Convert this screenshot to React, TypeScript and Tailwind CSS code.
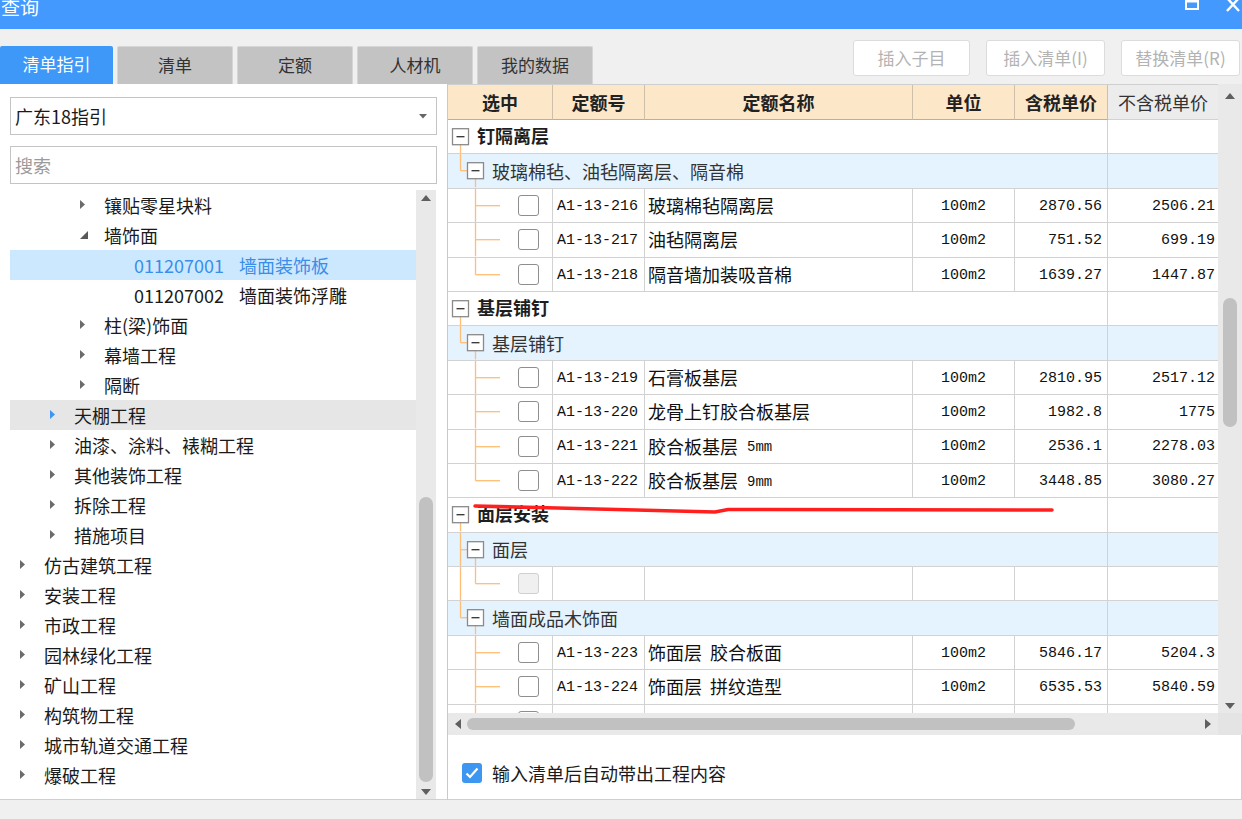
import React from "react";

const CJK = "font-['Noto_Sans_CJK_SC','Noto_Sans',sans-serif]";
const MONO = "font-['Liberation_Mono','DejaVu_Sans_Mono',monospace]";
const LINE = "#ffbd76";

type TreeItem = {
  lvl: number;
  text: string;
  code?: string;
  arrow?: "right" | "down" | "blue";
  selected?: boolean;
  hover?: boolean;
};

const tree: TreeItem[] = [
  { lvl: 2, arrow: "right", text: "镶贴零星块料" },
  { lvl: 2, arrow: "down", text: "墙饰面" },
  { lvl: 3, code: "011207001", text: "墙面装饰板", selected: true },
  { lvl: 3, code: "011207002", text: "墙面装饰浮雕" },
  { lvl: 2, arrow: "right", text: "柱(梁)饰面" },
  { lvl: 2, arrow: "right", text: "幕墙工程" },
  { lvl: 2, arrow: "right", text: "隔断" },
  { lvl: 1, arrow: "blue", text: "天棚工程", hover: true },
  { lvl: 1, arrow: "right", text: "油漆、涂料、裱糊工程" },
  { lvl: 1, arrow: "right", text: "其他装饰工程" },
  { lvl: 1, arrow: "right", text: "拆除工程" },
  { lvl: 1, arrow: "right", text: "措施项目" },
  { lvl: 0, arrow: "right", text: "仿古建筑工程" },
  { lvl: 0, arrow: "right", text: "安装工程" },
  { lvl: 0, arrow: "right", text: "市政工程" },
  { lvl: 0, arrow: "right", text: "园林绿化工程" },
  { lvl: 0, arrow: "right", text: "矿山工程" },
  { lvl: 0, arrow: "right", text: "构筑物工程" },
  { lvl: 0, arrow: "right", text: "城市轨道交通工程" },
  { lvl: 0, arrow: "right", text: "爆破工程" },
];

const indent = ["pl-[10px]", "pl-[40px]", "pl-[70px]", "pl-[124px]"];

type Row =
  | { kind: "g1"; text: string; child: boolean }
  | { kind: "g2"; text: string; l1more: boolean; child: boolean }
  | {
      kind: "d";
      l1more: boolean;
      last: boolean;
      code?: string;
      name?: string;
      mm?: string;
      unit?: string;
      p1?: string;
      p2?: string;
      disabled?: boolean;
    };

const rows: Row[] = [
  { kind: "g1", text: "钉隔离层", child: true },
  { kind: "g2", text: "玻璃棉毡、油毡隔离层、隔音棉", l1more: false, child: true },
  { kind: "d", l1more: false, last: false, code: "A1-13-216", name: "玻璃棉毡隔离层", unit: "100m2", p1: "2870.56", p2: "2506.21" },
  { kind: "d", l1more: false, last: false, code: "A1-13-217", name: "油毡隔离层", unit: "100m2", p1: "751.52", p2: "699.19" },
  { kind: "d", l1more: false, last: true, code: "A1-13-218", name: "隔音墙加装吸音棉", unit: "100m2", p1: "1639.27", p2: "1447.87" },
  { kind: "g1", text: "基层铺钉", child: true },
  { kind: "g2", text: "基层铺钉", l1more: false, child: true },
  { kind: "d", l1more: false, last: false, code: "A1-13-219", name: "石膏板基层", unit: "100m2", p1: "2810.95", p2: "2517.12" },
  { kind: "d", l1more: false, last: false, code: "A1-13-220", name: "龙骨上钉胶合板基层", unit: "100m2", p1: "1982.8", p2: "1775" },
  { kind: "d", l1more: false, last: false, code: "A1-13-221", name: "胶合板基层", mm: "5mm", unit: "100m2", p1: "2536.1", p2: "2278.03" },
  { kind: "d", l1more: false, last: true, code: "A1-13-222", name: "胶合板基层", mm: "9mm", unit: "100m2", p1: "3448.85", p2: "3080.27" },
  { kind: "g1", text: "面层安装", child: true },
  { kind: "g2", text: "面层", l1more: true, child: true },
  { kind: "d", l1more: true, last: true, disabled: true },
  { kind: "g2", text: "墙面成品木饰面", l1more: false, child: true },
  { kind: "d", l1more: false, last: false, code: "A1-13-223", name: "饰面层  胶合板面", unit: "100m2", p1: "5846.17", p2: "5204.3" },
  { kind: "d", l1more: false, last: false, code: "A1-13-224", name: "饰面层  拼纹造型", unit: "100m2", p1: "6535.53", p2: "5840.59" },
  { kind: "d", l1more: false, last: false, code: "A1-13-225", name: "饰面层  木纹造型面板", unit: "100m2", p1: "6912.40", p2: "6170.88" },
];

function Arrow({ kind }: { kind?: TreeItem["arrow"] }) {
  if (!kind) return null;
  if (kind === "down")
    return (
      <svg width="9" height="9" className="mt-[2px]">
        <polygon points="8,0 8,8 0,8" fill="#595959" />
      </svg>
    );
  return (
    <svg width="6" height="10">
      <polygon points="0,0 5,4.5 0,9" fill={kind === "blue" ? "#3d95ef" : "#6b6b6b"} />
    </svg>
  );
}

function ScrollTri({ dir, color = "#5f5f5f" }: { dir: "up" | "down" | "left" | "right"; color?: string }) {
  const pts = {
    up: "0,6 5,0 10,6",
    down: "0,0 10,0 5,6",
    left: "6,0 6,10 0,5",
    right: "0,0 0,10 6,5",
  }[dir];
  const horiz = dir === "up" || dir === "down";
  return (
    <svg width={horiz ? 10 : 6} height={horiz ? 6 : 10}>
      <polygon points={pts} fill={color} />
    </svg>
  );
}

function MinusBox({ x }: { x: number }) {
  return (
    <g transform={`translate(${x},0)`}>
      <rect x="0" y="50%" width="16" height="16" transform="translate(0,-8)" fill="white" stroke="#8a8a8a" />
      <line x1="4" x2="12" y1="50%" y2="50%" stroke="#333" />
    </g>
  );
}

function TreeLines({ row }: { row: Row }) {
  return (
    <svg className="pointer-events-none absolute left-0 top-0 h-full w-[60px]" strokeWidth="1.3">
      {row.kind === "g1" && (
        <>
          {row.child && <line x1="12.5" x2="12.5" y1="50%" y2="100%" stroke={LINE} />}
          <MinusBox x={4.5} />
        </>
      )}
      {row.kind === "g2" && (
        <>
          <line x1="12.5" x2="12.5" y1="0" y2={row.l1more ? "100%" : "50%"} stroke={LINE} />
          <line x1="12.5" x2="19.5" y1="50%" y2="50%" stroke={LINE} />
          {row.child && <line x1="27.5" x2="27.5" y1="50%" y2="100%" stroke={LINE} />}
          <MinusBox x={19.5} />
        </>
      )}
      {row.kind === "d" && (
        <>
          {row.l1more && <line x1="12.5" x2="12.5" y1="0" y2="100%" stroke={LINE} />}
          <line x1="27.5" x2="27.5" y1="0" y2={row.last ? "50%" : "100%"} stroke={LINE} />
          <line x1="27.5" x2="52" y1="50%" y2="50%" stroke={LINE} />
        </>
      )}
    </svg>
  );
}

function GridRow({ row }: { row: Row }) {
  if (row.kind === "g1" || row.kind === "g2") {
    const bg = row.kind === "g2" ? "bg-[#e5f3ff]" : "bg-white";
    return (
      <div className={`flex h-[34.4px] shrink-0 border-b border-[#d2d2d2] ${bg}`}>
        <div
          className={`relative flex w-[660px] items-center border-r border-[#d2d2d2] text-[18px] leading-none ${
            row.kind === "g1" ? "pb-[3px] pl-[29px] font-bold text-[#1e1e1e]" : "pb-[1px] pl-[44px] text-[#333]"
          }`}
        >
          <TreeLines row={row} />
          <span className="relative">{row.text}</span>
        </div>
        <div className="w-[110px]" />
      </div>
    );
  }
  const mono = `flex items-center pt-[3px] text-[15px] ${MONO}`;
  return (
    <div className="flex h-[34.4px] shrink-0 border-b border-[#d2d2d2] bg-white text-[#111]">
      <div className="relative flex w-[105px] items-center border-r border-[#d2d2d2] pl-[70px]">
        <TreeLines row={row} />
        <div
          className={`relative h-[21px] w-[21px] rounded-[3px] border-[1.5px] ${
            row.disabled ? "border-[#d0d0d0] bg-[#f0f0f0]" : "border-[#8e8e8e] bg-white"
          }`}
        />
      </div>
      <div className={`${mono} w-[92px] border-r border-[#d2d2d2] pl-[4px]`}>{row.code}</div>
      <div className="flex w-[268px] items-center whitespace-pre border-r border-[#d2d2d2] pb-[1px] pl-[3px] text-[18px] leading-none">
        {row.name}
        {row.mm && <span className={`ml-[9px] pt-[3px] text-[14px] ${MONO}`}>{row.mm}</span>}
      </div>
      <div className={`${mono} w-[102px] justify-center border-r border-[#d2d2d2]`}>{row.unit}</div>
      <div className={`${mono} w-[93px] justify-end border-r border-[#d2d2d2] pr-[5px]`}>{row.p1}</div>
      <div className={`${mono} w-[110px] justify-end pr-[3px]`}>{row.p2}</div>
    </div>
  );
}

export default function App() {
  const tabs = ["清单", "定额", "人材机", "我的数据"];
  const buttons = [
    { t: "插入子目", w: "w-[117px]" },
    { t: "插入清单(I)", w: "w-[119px]" },
    { t: "替换清单(R)", w: "w-[119px]" },
  ];
  const headers = [
    { t: "选中", w: "w-[105px]" },
    { t: "定额号", w: "w-[92px]" },
    { t: "定额名称", w: "w-[268px]" },
    { t: "单位", w: "w-[102px]" },
    { t: "含税单价", w: "w-[93px]" },
  ];

  return (
    <div className={`relative h-[819px] w-[1242px] overflow-hidden bg-[#f0f0f0] ${CJK}`}>
      {/* title bar */}
      <div className="flex h-[29px] items-start justify-between overflow-hidden bg-[#4499ff]">
        <span className="-mt-[3px] ml-[1px] text-[19px] leading-none text-white">查询</span>
        <div className="flex items-start gap-[27px] pr-[2px]">
          <svg width="14" height="11">
            <rect x="1" y="-2" width="12" height="11" fill="none" stroke="white" strokeWidth="2" />
            <line x1="1" x2="13" y1="1" y2="1" stroke="white" strokeWidth="3" />
          </svg>
          <svg width="14" height="13">
            <line x1="1" y1="-2" x2="13" y2="11" stroke="white" strokeWidth="2.4" />
            <line x1="13" y1="-2" x2="1" y2="11" stroke="white" strokeWidth="2.4" />
          </svg>
        </div>
      </div>

      {/* tabs + buttons */}
      <div className="flex h-[55px] justify-between">
        <div className="flex gap-[4px] self-end">
          <div className="flex h-[38px] w-[113px] items-center justify-center rounded-t-[2px] bg-[#3d98f7] pb-[2px] text-[17px] text-white">
            清单指引
          </div>
          {tabs.map((t) => (
            <div
              key={t}
              className="flex h-[38px] w-[116px] items-center justify-center rounded-t-[2px] border border-b-0 border-[#d6d6d6] bg-[#c3c3c3] pb-[2px] text-[17px] text-[#333]"
            >
              {t}
            </div>
          ))}
        </div>
        <div className="mt-[11px] flex gap-[16px] pr-[2px]">
          {buttons.map((b) => (
            <div
              key={b.t}
              className={`flex h-[36px] ${b.w} items-center justify-center rounded-[3px] border border-[#dcdcdc] bg-white text-[17px] text-[#b3b3b3]`}
            >
              {b.t}
            </div>
          ))}
        </div>
      </div>

      {/* main */}
      <div className="flex h-[716px]">
        {/* left panel */}
        <div className="flex w-[447px] flex-col border-b border-[#cfcfcf] bg-white pl-[10px] pt-[13px]">
          <div className="flex h-[38px] w-[427px] items-center justify-between border border-[#c4c4c4] pl-[4px] pr-[9px] text-[18px] text-[#1a1a1a]">
            <span>广东18指引</span>
            <svg width="8" height="5">
              <polygon points="0,0 8,0 4,4.5" fill="#666" />
            </svg>
          </div>
          <div className="mt-[11px] flex h-[38px] w-[427px] items-center border border-[#c4c4c4] pl-[4px] text-[18px] text-[#9a9a9a]">
            搜索
          </div>
          <div className="mt-[6px] flex h-[609px]">
            <div className="w-[406px] overflow-hidden">
              {tree.map((it, i) => (
                <div
                  key={i}
                  className={`flex h-[30px] items-center ${indent[it.lvl]} pb-[1px] text-[18px] leading-none ${
                    it.selected ? "bg-[#cce8ff] text-[#3a8ee8]" : it.hover ? "bg-[#e6e6e6] text-[#1a1a1a]" : "text-[#1a1a1a]"
                  }`}
                >
                  {it.arrow && (
                    <div className="flex w-[24px] shrink-0 items-center">
                      <Arrow kind={it.arrow} />
                    </div>
                  )}
                  {it.code && <span className="mr-[15px]">{it.code}</span>}
                  <span>{it.text}</span>
                </div>
              ))}
            </div>
            <div className="flex w-[20px] flex-col items-center bg-[#e9e9e9] pt-[5px]">
              <ScrollTri dir="up" />
              <div className="mt-[296px] h-[285px] w-[14px] rounded-full bg-[#c1c1c1]" />
              <div className="mt-auto mb-[4px]">
                <ScrollTri dir="down" />
              </div>
            </div>
          </div>
        </div>

        {/* right panel */}
        <div className="flex w-[795px] flex-col border-l border-[#c9c9c9]">
          <div className="flex h-[651px]">
            <div className="flex w-[770px] flex-col">
              {/* header */}
              <div className="flex h-[36px] shrink-0 border-t border-[#cfcfcf]">
                {headers.map((h) => (
                  <div
                    key={h.t}
                    className={`flex ${h.w} items-center justify-center border-r border-b border-r-[#cdbfa8] border-b-[#86b9ee] bg-[#fde7c9] text-[18px] font-bold leading-none text-[#222]`}
                  >
                    {h.t}
                  </div>
                ))}
                <div className="flex w-[110px] items-center justify-center border-b border-[#d2d2d2] bg-[#ececec] text-[18px] leading-none text-[#333]">
                  不含税单价
                </div>
              </div>
              {/* body */}
              <div className="flex h-[593px] flex-col overflow-hidden bg-white">
                {rows.map((r, i) => (
                  <GridRow key={i} row={r} />
                ))}
              </div>
              {/* horizontal scrollbar */}
              <div className="flex h-[22px] items-center bg-[#e9e9e9] pl-[7px] pr-[7px]">
                <ScrollTri dir="left" />
                <div className="ml-[6px] h-[12px] w-[608px] rounded-full bg-[#c1c1c1]" />
                <div className="ml-auto">
                  <ScrollTri dir="right" />
                </div>
              </div>
            </div>
            <div className="flex w-[24px] flex-col">
              <div className="flex h-[629px] flex-col items-center bg-[#e9e9e9] pt-[9px]">
                <ScrollTri dir="up" />
                <div className="mt-[199px] h-[129px] w-[14px] rounded-full bg-[#c1c1c1]" />
                <div className="mt-auto mb-[4px]">
                  <ScrollTri dir="down" />
                </div>
              </div>
              <div className="h-[22px] bg-[#e4e4e4]" />
            </div>
          </div>
          {/* bottom option */}
          <div className="flex h-[65px] items-center border-b border-r border-[#cfcfcf] bg-white pl-[14px] pt-[11px]">
            <div className="flex h-[20px] w-[20px] items-center justify-center rounded-[3px] bg-[#3d96f0]">
              <svg width="14" height="12">
                <polyline points="1.5,6.5 5,10 12.5,1.5" fill="none" stroke="white" strokeWidth="2.2" />
              </svg>
            </div>
            <span className="ml-[10px] text-[18px] leading-none text-[#1a1a1a]">输入清单后自动带出工程内容</span>
          </div>
        </div>
      </div>

      {/* red hand-drawn annotation */}
      <svg className="pointer-events-none absolute left-0 top-0" width="1242" height="819">
        <polyline
          points="475,506 715,512 728,509.5 1052,510"
          fill="none"
          stroke="#ff1f1f"
          strokeWidth="3.5"
          strokeLinecap="round"
        />
      </svg>
    </div>
  );
}
